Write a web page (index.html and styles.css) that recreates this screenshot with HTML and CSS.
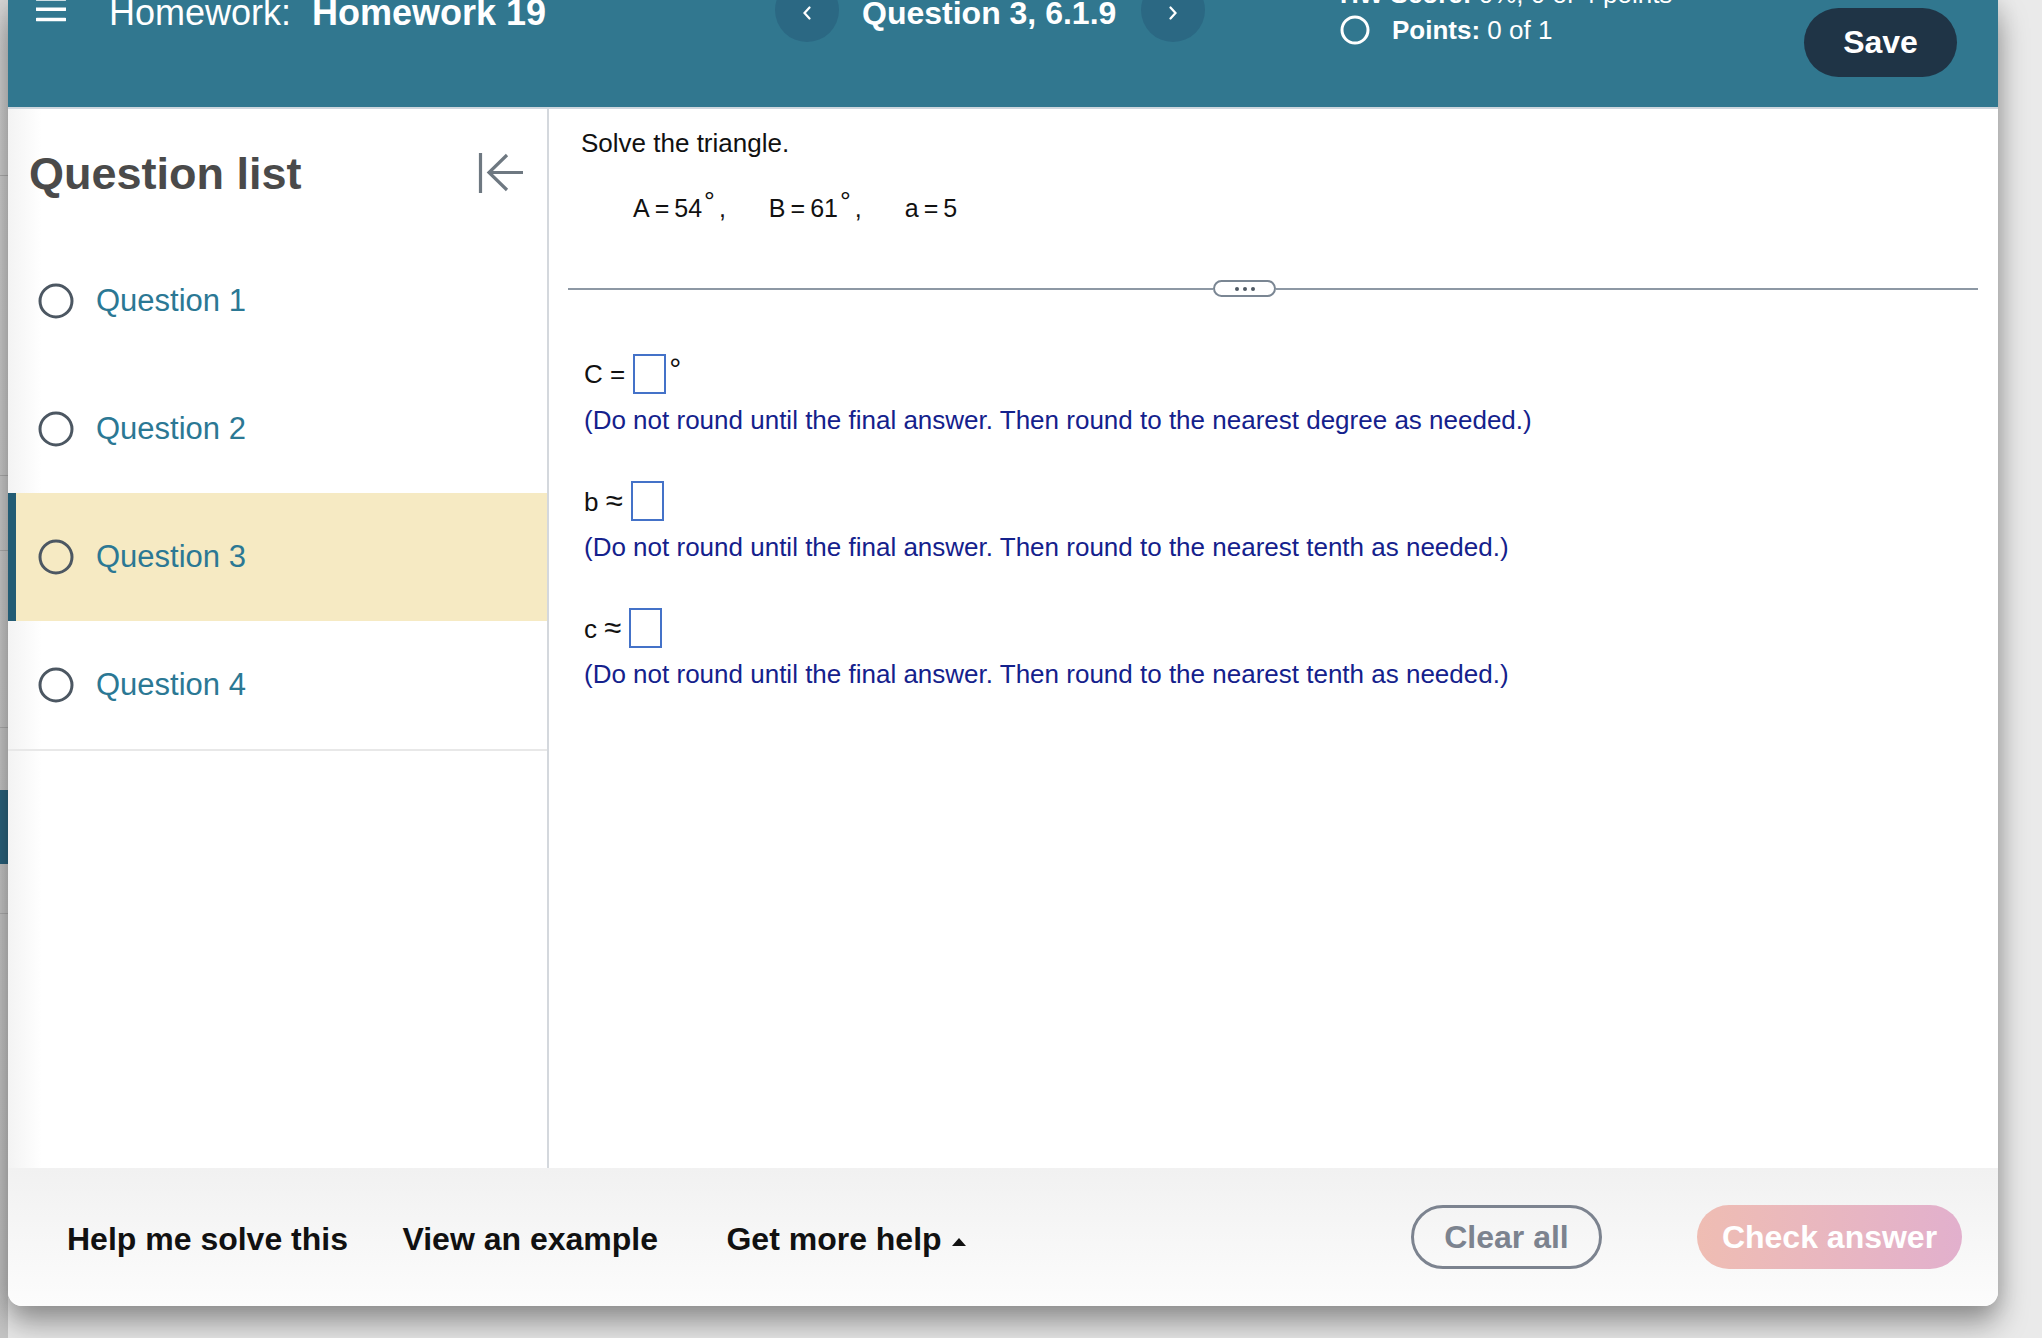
FILE: index.html
```html
<!DOCTYPE html>
<html>
  <head>
    <meta charset="utf-8">
    <link rel="stylesheet" href="styles.css">
  </head>
  <body>
    <div class="backdrop">
      <div class="bd-line bd-line1"></div>
      <div class="bd-line bd-line2"></div>
      <div class="bd-line bd-line3"></div>
      <div class="bd-line bd-line4"></div>
      <div class="bd-block"></div>
      <div class="bd-line bd-line5"></div>
    </div>

    <div class="modal">
      <div class="header">
        <svg class="menu-icon" width="30" height="27" viewBox="0 0 30 27">
          <path d="M1 3H29M1 13.2H29M1 23.5H29" stroke="#fff" stroke-width="3.6" stroke-linecap="round"/>
        </svg>
        <div class="title">
          <span>Homework:</span><span class="title-name">Homework 19</span>
        </div>
        <div class="nav">
          <div class="nav-btn">
            <svg width="12" height="14" viewBox="0 0 12 14"><path d="M8.5 1.5L3.5 7L8.5 12.5" stroke="#fff" stroke-width="2.2" fill="none" stroke-linecap="round"/></svg>
          </div>
          <div class="nav-title">Question 3, 6.1.9</div>
          <div class="nav-btn">
            <svg width="12" height="14" viewBox="0 0 12 14"><path d="M3.5 1.5L8.5 7L3.5 12.5" stroke="#fff" stroke-width="2.2" fill="none" stroke-linecap="round"/></svg>
          </div>
        </div>
        <div class="score">
          <div class="score-hw"><b>HW Score:</b> 0%, 0 of 4 points</div>
          <div class="points">
            <svg width="30" height="30" viewBox="0 0 30 30"><circle cx="15" cy="15" r="13" stroke="#fff" stroke-width="3" fill="none"/></svg>
            <span><b>Points:</b> 0 of 1</span>
          </div>
        </div>
        <div class="save">Save</div>
      </div>

      <div class="body">
        <div class="sidebar">
          <div class="list-head">
            <div class="list-title">Question list</div>
            <svg class="collapse-icon" width="46" height="42" viewBox="0 0 46 42">
              <path d="M2.5 1V41M11 20.5H45M29 3L11 20.5L29 38" stroke="#6e7881" stroke-width="3.2" fill="none"/>
            </svg>
          </div>
          <div class="q-list">
            <div class="q-item">
              <svg width="36" height="36" viewBox="0 0 36 36"><circle cx="18" cy="18" r="16" stroke="#4c5762" stroke-width="3" fill="none"/></svg>
              <span>Question 1</span>
            </div>
            <div class="q-item">
              <svg width="36" height="36" viewBox="0 0 36 36"><circle cx="18" cy="18" r="16" stroke="#4c5762" stroke-width="3" fill="none"/></svg>
              <span>Question 2</span>
            </div>
            <div class="q-item current">
              <svg width="36" height="36" viewBox="0 0 36 36"><circle cx="18" cy="18" r="16" stroke="#4c5762" stroke-width="3" fill="none"/></svg>
              <span>Question 3</span>
            </div>
            <div class="q-item">
              <svg width="36" height="36" viewBox="0 0 36 36"><circle cx="18" cy="18" r="16" stroke="#4c5762" stroke-width="3" fill="none"/></svg>
              <span>Question 4</span>
            </div>
          </div>
        </div>

        <div class="content">
          <div class="prompt">Solve the triangle.</div>
          <div class="values">
            <span>A&thinsp;=&thinsp;54<span class="deg">°</span>,</span>
            <span>B&thinsp;=&thinsp;61<span class="deg">°</span>,</span>
            <span>a&thinsp;=&thinsp;5</span>
          </div>
          <div class="divider">
            <div class="divider-line left"></div>
            <div class="more"><span></span><span></span><span></span></div>
            <div class="divider-line right"></div>
          </div>
          <div class="answers">
            <div class="answer">
              <div class="answer-line">
                <span class="label">C =</span>
                <span class="blank"></span>
                <span class="unit">°</span>
              </div>
              <div class="hint">(Do not round until the final answer. Then round to the nearest degree as needed.)</div>
            </div>
            <div class="answer">
              <div class="answer-line">
                <span class="label">b <span class="approx">≈</span></span>
                <span class="blank"></span>
              </div>
              <div class="hint">(Do not round until the final answer. Then round to the nearest tenth as needed.)</div>
            </div>
            <div class="answer">
              <div class="answer-line">
                <span class="label">c <span class="approx">≈</span></span>
                <span class="blank"></span>
              </div>
              <div class="hint">(Do not round until the final answer. Then round to the nearest tenth as needed.)</div>
            </div>
          </div>
        </div>
      </div>

      <div class="footer">
        <div class="help-links">
          <span class="help help-solve">Help me solve this</span>
          <span class="help help-example">View an example</span>
          <span class="help">Get more help<svg class="caret" width="14" height="8" viewBox="0 0 14 8"><path d="M0 8L7 0L14 8Z" fill="#111"/></svg></span>
        </div>
        <div class="btn-clear">Clear all</div>
        <div class="btn-check">Check answer</div>
      </div>
    </div>
  </body>
</html>
```

FILE: styles.css
```css
body{
  margin: 0;
  height: 1338px;
  overflow: hidden;
  display: flex;
  align-items: flex-start;
  background: #eaeaea;
  font-family: "Liberation Sans", Arial, Helvetica, sans-serif;
}

/* page behind the dialog */
.backdrop{
  width: 8px;
  height: 1338px;
  flex-shrink: 0;
  display: flex;
  flex-direction: column;
  background: linear-gradient(#d6d6d6, #c6c6c6);
}
.bd-line{
  height: 1px;
  background: #b2b2b2;
}
.bd-line1{ margin-top: 175px; }
.bd-line2{ margin-top: 299px; }
.bd-line3{ margin-top: 74px; }
.bd-line4{ margin-top: 176px; }
.bd-block{
  margin-top: 62px;
  height: 74px;
  background: #2b6580;
}
.bd-line5{ margin-top: 49px; }

.modal{
  width: 1990px;
  height: 1306px;
  flex-shrink: 0;
  display: flex;
  flex-direction: column;
  background: #fff;
  border-radius: 0 0 14px 14px;
  overflow: hidden;
  box-shadow: 0 18px 30px rgba(0,0,0,0.36), 0 0 22px rgba(0,0,0,0.12);
}

/* header */
.header{
  height: 107px;
  flex-shrink: 0;
  display: flex;
  align-items: flex-start;
  background: #31778f;
  border-bottom: 2px solid #cfd7de;
  color: #fff;
}
.menu-icon{
  margin: -4px 0 0 28px;
  flex-shrink: 0;
}
.title{
  flex: 0 0 666px;
  margin: -5px 0 0 43px;
  font-size: 36px;
  line-height: 36px;
  white-space: nowrap;
}
.title-name{
  font-weight: bold;
  margin-left: 21px;
}
.nav{
  flex: 0 0 565px;
  display: flex;
  align-items: flex-start;
}
.nav-btn{
  width: 64px;
  height: 64px;
  margin-top: -22px;
  padding-top: 5px;
  box-sizing: border-box;
  border-radius: 50%;
  background: #2b6883;
  display: flex;
  align-items: center;
  justify-content: center;
}
.nav-title{
  width: 279px;
  margin: -3px 0 0 23px;
  font-size: 32px;
  line-height: 32px;
  font-weight: bold;
  white-space: nowrap;
}
.score{
  margin-top: -19px;
  font-size: 26px;
  line-height: 26px;
  white-space: nowrap;
}
.points{
  margin-top: 8px;
  display: flex;
  align-items: center;
  gap: 22px;
}
.save{
  margin: 8px 41px 0 auto;
  width: 153px;
  height: 69px;
  border-radius: 35px;
  background: #1f3446;
  font-size: 32px;
  font-weight: bold;
  display: flex;
  align-items: center;
  justify-content: center;
}

.body{
  flex: 1;
  display: flex;
}

/* question list */
.sidebar{
  width: 539px;
  flex-shrink: 0;
  border-right: 2px solid #d4d8dd;
  background: linear-gradient(to right, #f3f3f3, #fff 34px);
}
.list-head{
  height: 128px;
  box-sizing: border-box;
  padding: 42px 23px 0 21px;
  display: flex;
  justify-content: space-between;
  align-items: flex-start;
}
.list-title{
  font-size: 45px;
  line-height: 45px;
  font-weight: bold;
  color: #4a4a4a;
}
.collapse-icon{
  margin-top: 1px;
}
.q-list{
  border-bottom: 2px solid #e8e8e8;
}
.q-item{
  height: 128px;
  box-sizing: border-box;
  padding-left: 30px;
  display: flex;
  align-items: center;
  gap: 22px;
  font-size: 31px;
  color: #2b7894;
}
.q-item.current{
  background: #f6eac3;
  border-left: 8px solid #235c74;
  padding-left: 22px;
}

/* question */
.content{
  flex: 1;
  padding: 19px 20px 0 19px;
  color: #111;
}
.prompt{
  padding-left: 13px;
  font-size: 26px;
  line-height: 31px;
}
.values{
  margin-top: 34px;
  padding-left: 65px;
  display: flex;
  gap: 43px;
  font-size: 25px;
  line-height: 30px;
  white-space: nowrap;
}
.deg{
  font-size: 27px;
  line-height: 0;
  vertical-align: 6px;
  margin: 0 4px 0 2px;
}
.divider{
  margin-top: 57px;
  height: 17px;
  display: flex;
  align-items: center;
}
.divider-line{
  height: 2px;
  background: #8d98a4;
}
.divider-line.left{ flex: 645; }
.divider-line.right{ flex: 702; }
.more{
  width: 63px;
  height: 17px;
  box-sizing: border-box;
  border: 2px solid #7a8693;
  border-radius: 9px;
  background: #fff;
  display: flex;
  align-items: center;
  justify-content: center;
  gap: 4px;
}
.more span{
  width: 4px;
  height: 4px;
  border-radius: 50%;
  background: #4f5964;
}
.answers{
  margin-top: 57px;
  padding-left: 16px;
}
.answer + .answer{
  margin-top: 45px;
}
.answer-line{
  height: 40px;
  display: flex;
  align-items: center;
  font-size: 26px;
  line-height: 26px;
}
.label{
  margin-right: 8px;
}
.approx{
  font-size: 31px;
}
.blank{
  width: 33px;
  height: 40px;
  box-sizing: border-box;
  border: 2px solid #4472c8;
}
.unit{
  align-self: flex-start;
  margin-left: 3px;
  font-size: 30px;
  line-height: 30px;
}
.hint{
  margin-top: 11px;
  font-size: 26px;
  line-height: 31px;
  color: #14218c;
}

/* footer */
.footer{
  height: 138px;
  flex-shrink: 0;
  display: flex;
  align-items: center;
  padding: 0 36px 0 59px;
  background: linear-gradient(#f1f1f1, #fcfcfc);
}
.help-links{
  align-self: flex-start;
  margin-top: 55px;
  white-space: nowrap;
}
.help{
  font-size: 32px;
  line-height: 32px;
  font-weight: bold;
  color: #111;
}
.help-solve{ margin-right: 50px; }
.help-example{ margin-right: 64px; }
.caret{
  margin-left: 10px;
  vertical-align: 4px;
}
.btn-clear{
  margin-left: auto;
  width: 191px;
  height: 64px;
  box-sizing: border-box;
  border: 3px solid #7c838f;
  border-radius: 32px;
  color: #7c838f;
  font-size: 32px;
  font-weight: bold;
  display: flex;
  align-items: center;
  justify-content: center;
}
.btn-check{
  margin-left: 95px;
  width: 265px;
  height: 64px;
  border-radius: 32px;
  background: linear-gradient(to right, #efbdb3, #e2b0cd);
  color: #fff;
  font-size: 32px;
  font-weight: bold;
  display: flex;
  align-items: center;
  justify-content: center;
}
```
